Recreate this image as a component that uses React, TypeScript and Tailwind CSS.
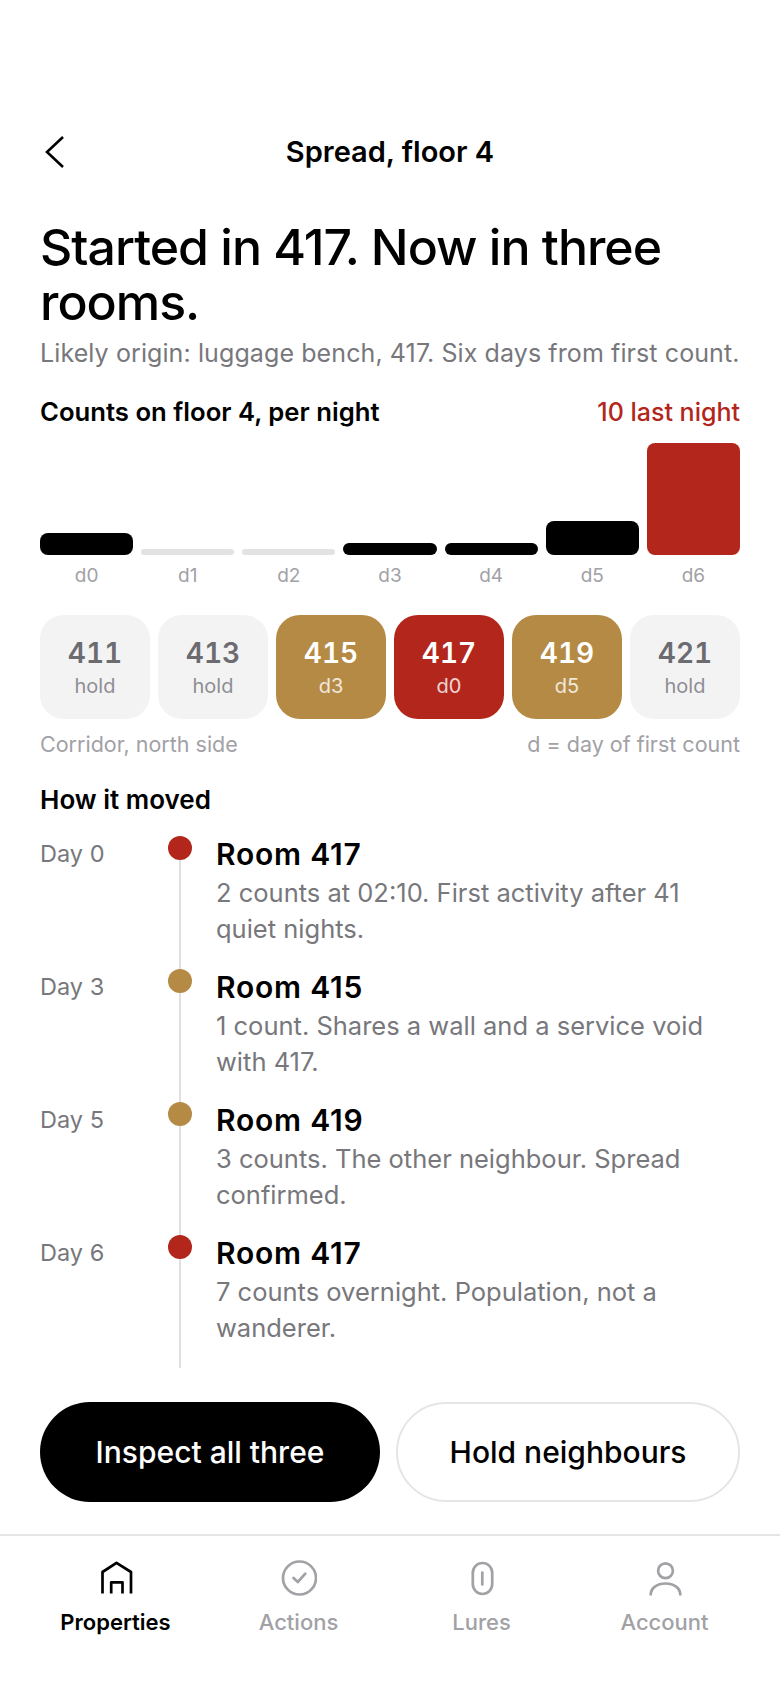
import React from 'react';

const FONT = "font-['Inter',sans-serif]";

const bars = [
  { label: 'd0', h: 'h-[22px]', color: 'bg-black' },
  { label: 'd1', h: 'h-[6px]', color: 'bg-[#e3e3e3]' },
  { label: 'd2', h: 'h-[6px]', color: 'bg-[#e3e3e3]' },
  { label: 'd3', h: 'h-[12px]', color: 'bg-black' },
  { label: 'd4', h: 'h-[12px]', color: 'bg-black' },
  { label: 'd5', h: 'h-[34px]', color: 'bg-black' },
  { label: 'd6', h: 'h-[112px]', color: 'bg-[#b2261c]' },
];

const rooms = [
  { n: '411', sub: 'hold', box: 'bg-[#f3f3f4]', num: 'text-[#6b6b70]', note: 'text-[#8e8e93]' },
  { n: '413', sub: 'hold', box: 'bg-[#f3f3f4]', num: 'text-[#6b6b70]', note: 'text-[#8e8e93]' },
  { n: '415', sub: 'd3', box: 'bg-[#b58a45]', num: 'text-white', note: 'text-white/80' },
  { n: '417', sub: 'd0', box: 'bg-[#b2261c]', num: 'text-white', note: 'text-white/80' },
  { n: '419', sub: 'd5', box: 'bg-[#b58a45]', num: 'text-white', note: 'text-white/80' },
  { n: '421', sub: 'hold', box: 'bg-[#f3f3f4]', num: 'text-[#6b6b70]', note: 'text-[#8e8e93]' },
];

const moves = [
  { day: 'Day 0', dot: 'bg-[#b2261c]', room: 'Room 417', text: '2 counts at 02:10. First activity after 41 quiet nights.' },
  { day: 'Day 3', dot: 'bg-[#b58a45]', room: 'Room 415', text: '1 count. Shares a wall and a service void with 417.' },
  { day: 'Day 5', dot: 'bg-[#b58a45]', room: 'Room 419', text: '3 counts. The other neighbour. Spread confirmed.' },
  { day: 'Day 6', dot: 'bg-[#b2261c]', room: 'Room 417', text: '7 counts overnight. Population, not a wanderer.' },
];

function HomeIcon() {
  return (
    <svg width="36" height="36" viewBox="0 0 36 36" fill="none" stroke="currentColor" strokeWidth="2.7" strokeLinejoin="round">
      <path d="M4.5 33.5V12L18.5 2.8 33 12v21.5" />
      <path d="M13.2 33.5V22.3h11.3v11.2" />
    </svg>
  );
}

function CheckIcon() {
  return (
    <svg width="36" height="36" viewBox="0 0 36 36" fill="none" stroke="currentColor" strokeWidth="2.7" strokeLinecap="round" strokeLinejoin="round">
      <circle cx="18.5" cy="18" r="16.5" />
      <path d="M12.5 18l4.3 4 7.5-8.3" />
    </svg>
  );
}

function LureIcon() {
  return (
    <svg width="36" height="36" viewBox="0 0 36 36" fill="none" stroke="currentColor" strokeWidth="2.7" strokeLinecap="round">
      <rect x="8.8" y="3" width="19.4" height="31" rx="9.7" />
      <path d="M18.3 12.5v12" />
    </svg>
  );
}

function PersonIcon() {
  return (
    <svg width="36" height="36" viewBox="0 0 36 36" fill="none" stroke="currentColor" strokeWidth="2.7">
      <circle cx="18.5" cy="10.7" r="7.4" />
      <path d="M3.6 35.5C3.6 28 10 23.5 18.5 23.5S33.4 28 33.4 35.5" />
    </svg>
  );
}

const tabs = [
  { label: 'Properties', Icon: HomeIcon, on: true },
  { label: 'Actions', Icon: CheckIcon, on: false },
  { label: 'Lures', Icon: LureIcon, on: false },
  { label: 'Account', Icon: PersonIcon, on: false },
];

export default function App() {
  return (
    <div className={`w-[780px] h-[1688px] bg-white flex flex-col text-black ${FONT}`}>
      {/* header */}
      <div className="h-[64px] mt-[120px] px-[40px] flex items-center relative shrink-0">
        <svg width="24" height="36" viewBox="0 0 24 36" fill="none" stroke="black" strokeWidth="2.6" className="absolute left-[42px] top-[14px]">
          <path d="M21 3L5 18l16 15" />
        </svg>
        <div className="w-full text-center text-[29px] leading-[36px] font-semibold tracking-[0px]">Spread, floor 4</div>
      </div>

      <div className="px-[40px] flex flex-col flex-1">
        <h1 className="mt-[36px] text-[50px] leading-[55px] font-medium tracking-[-1px]">Started in 417. Now in three rooms.</h1>
        <p className="mt-[7px] text-[25px] leading-[32px] text-[#77777c] tracking-[0.1px] whitespace-nowrap">Likely origin: luggage bench, 417. Six days from first count.</p>

        <div className="mt-[27px] flex justify-between items-center">
          <span className="text-[25.7px] leading-[32px] font-semibold">Counts on floor 4, per night</span>
          <span className="text-[25px] leading-[32px] font-medium text-[#b2261c]">10 last night</span>
        </div>

        {/* chart */}
        <div className="mt-[15px] flex gap-[8px]">
          {bars.map((b) => (
            <div key={b.label} className="flex-1 flex flex-col items-stretch">
              <div className="h-[112px] flex items-end">
                <div className={`w-full rounded-[8px] ${b.h} ${b.color}`} />
              </div>
              <div className="mt-[8px] text-center text-[19px] leading-[26px] text-[#a1a1a6]">{b.label}</div>
            </div>
          ))}
        </div>

        {/* corridor */}
        <div className="mt-[26px] grid grid-cols-6 gap-[8px]">
          {rooms.map((r) => (
            <div key={r.n} className={`h-[104px] rounded-[24px] flex flex-col items-center pt-[22px] ${r.box}`}>
              <div className={`text-[28px] leading-[32px] font-semibold tabular-nums ${r.num}`}>{r.n}</div>
              <div className={`mt-[4px] text-[20px] leading-[26px] ${r.note}`}>{r.sub}</div>
            </div>
          ))}
        </div>
        <div className="mt-[11px] flex justify-between text-[21.5px] leading-[28px] text-[#a1a1a6]">
          <span>Corridor, north side</span>
          <span>d = day of first count</span>
        </div>

        <div className="mt-[26px] text-[26px] leading-[32px] font-semibold">How it moved</div>

        {/* timeline */}
        <div className="mt-[20px] flex flex-col">
          {moves.map((m, i) => (
            <div key={i} className="h-[133px] flex">
              <div className="w-[128px] pt-[2px] text-[23.5px] leading-[32px] text-[#77777c]">{m.day}</div>
              <div className="w-[24px] flex flex-col items-center">
                <div className={`w-[24px] h-[24px] rounded-full shrink-0 ${m.dot}`} />
                <div className="w-[2px] flex-1 bg-[#e0e0e0]" />
              </div>
              <div className="ml-[24px] flex-1">
                <div className="text-[30px] leading-[36px] font-semibold tracking-[0.8px]">{m.room}</div>
                <div className="mt-[3px] max-w-[505px] text-[25.5px] leading-[36px] text-[#77777c]">{m.text}</div>
              </div>
            </div>
          ))}
        </div>

        {/* actions */}
        <div className="mt-[34px] flex gap-[16px]">
          <button className="w-[340px] h-[100px] rounded-full bg-black text-white text-[30px] font-medium">Inspect all three</button>
          <button className="flex-1 h-[100px] rounded-full border-2 border-[#e5e5e5] text-black text-[30px] font-medium">Hold neighbours</button>
        </div>
      </div>

      {/* tab bar */}
      <div className="h-[154px] border-t-2 border-[#e5e5e5] px-[24px] pt-[24px] grid grid-cols-4 shrink-0">
        {tabs.map(({ label, Icon, on }) => (
          <div key={label} className={`flex flex-col items-center ${on ? 'text-black' : 'text-[#a1a1a6]'}`}>
            <Icon />
            <span className={`mt-[11px] text-[22px] leading-[30px] ${on ? 'font-semibold' : 'font-medium'}`}>{label}</span>
          </div>
        ))}
      </div>
    </div>
  );
}
